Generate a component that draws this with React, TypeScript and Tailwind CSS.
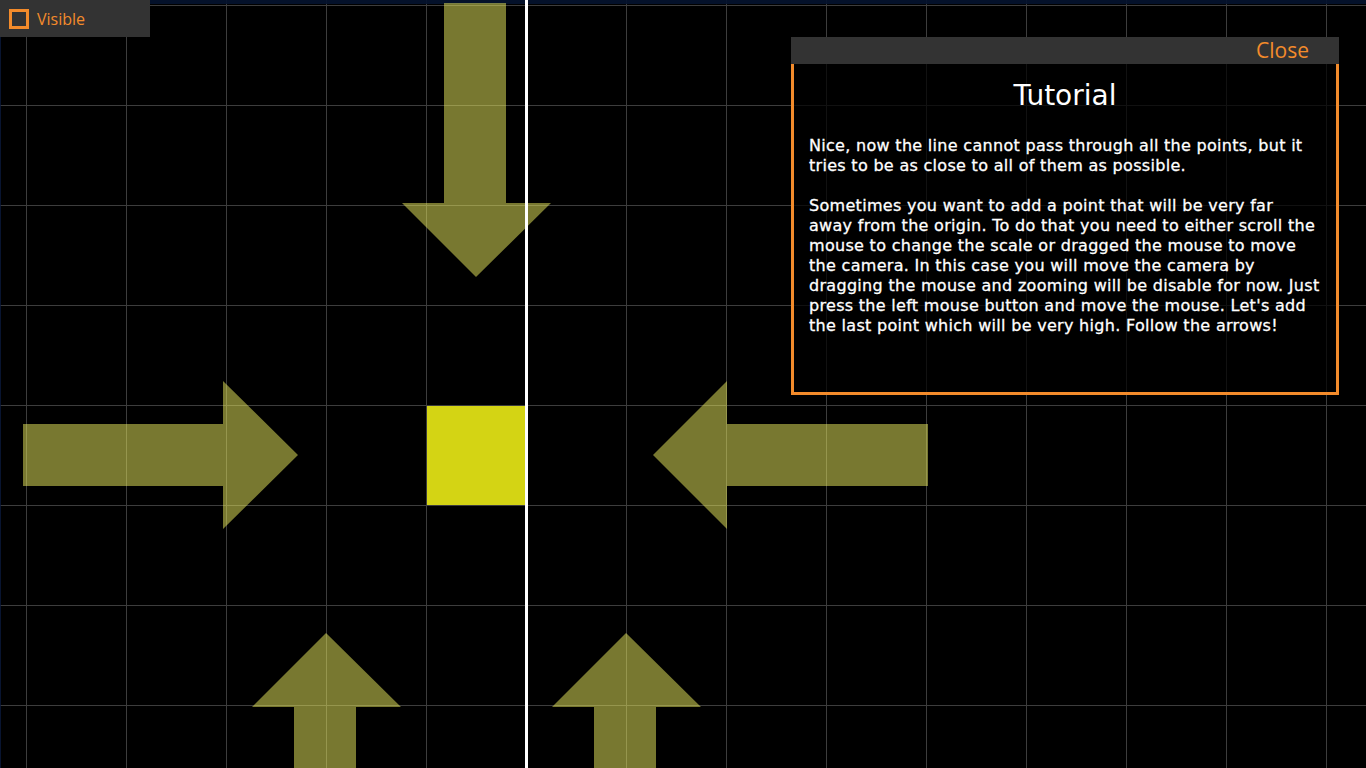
import React from "react";

function Canvas() {
  const vx: number[] = [];
  for (let x = 26; x < 1366; x += 100) vx.push(x);
  const hy: number[] = [];
  for (let y = 5; y < 768; y += 100) hy.push(y);
  const arrowFill = "rgba(240,240,96,0.5)";
  return (
    <svg width={1366} height={768} className="absolute inset-0 block">
      <rect x={0} y={0} width={1366} height={768} fill="#000" />
      {vx.map((x) => (
        <line key={"v" + x} x1={x + 0.5} y1={0} x2={x + 0.5} y2={768} stroke="#3d3d3d" strokeWidth={1} />
      ))}
      {hy.map((y) => (
        <line key={"h" + y} x1={0} y1={y + 0.5} x2={1366} y2={y + 0.5} stroke="#3d3d3d" strokeWidth={1} />
      ))}
      <rect x={0} y={0} width={1366} height={4} fill="rgba(4,18,46,0.92)" />
      <rect x={0} y={0} width={1} height={768} fill="rgba(10,25,60,0.8)" />
      <polygon points="444,3 506,3 506,203 551,203 476,277 402,203 444,203" fill={arrowFill} />
      <polygon points="23,424 223,424 223,381 298,455 223,529 223,486 23,486" fill={arrowFill} />
      <polygon points="928,424 727,424 727,381 653,455 727,529 727,486 928,486" fill={arrowFill} />
      <polygon points="294,768 294,707 252,707 326,633 401,707 356,707 356,768" fill={arrowFill} />
      <polygon points="594,768 594,707 552,707 626,633 701,707 656,707 656,768" fill={arrowFill} />
      <rect x={427} y={406} width={98} height={99} fill="#d4d414" />
      <rect x={525} y={0} width={3} height={768} fill="#ffffff" />
    </svg>
  );
}

export default function App() {
  return (
    <div className="relative w-[1366px] h-[768px] overflow-hidden bg-black">
      <Canvas />

      <div className="absolute left-0 top-0 w-[150px] h-[37px] bg-[#333333] flex items-center pl-[9px] gap-[8px]">
        <div className="w-[20px] h-[20px] border-[3px] border-[#f38b2b]" />
        <span className="text-[16px] leading-none text-[#f38b2b] [font-family:'Open_Sans',sans-serif]">
          Visible
        </span>
      </div>

      <div className="absolute left-[791px] top-[37px] w-[548px] flex flex-col">
        <div className="h-[27px] bg-[#333333] flex items-center justify-end pr-[30px]">
          <span className="text-[21px] leading-none text-[#f38b2b] [font-family:'Open_Sans',sans-serif] -mt-[1px]">
            Close
          </span>
        </div>
        <div className="h-[331px] border-[3px] border-t-0 border-[#f38b2b] bg-[rgba(0,0,0,0.72)] flex flex-col text-white [font-family:'DejaVu_Sans',sans-serif]">
          <div className="text-center text-[28px] leading-[34px] mt-[15px]">Tutorial</div>
          <div className="pl-[15px] pr-[12px] mt-[23px] text-[16px] tracking-[0.3px] [-webkit-text-stroke:0.3px_white] leading-[20px] whitespace-nowrap">
            Nice, now the line cannot pass through all the points, but it
            <br />
            tries to be as close to all of them as possible.
            <br />
            <br />
            Sometimes you want to add a point that will be very far
            <br />
            away from the origin. To do that you need to either scroll the
            <br />
            mouse to change the scale or dragged the mouse to move
            <br />
            the camera. In this case you will move the camera by
            <br />
            dragging the mouse and zooming will be disable for now. Just
            <br />
            press the left mouse button and move the mouse. Let's add
            <br />
            the last point which will be very high. Follow the arrows!
          </div>
        </div>
      </div>
    </div>
  );
}
